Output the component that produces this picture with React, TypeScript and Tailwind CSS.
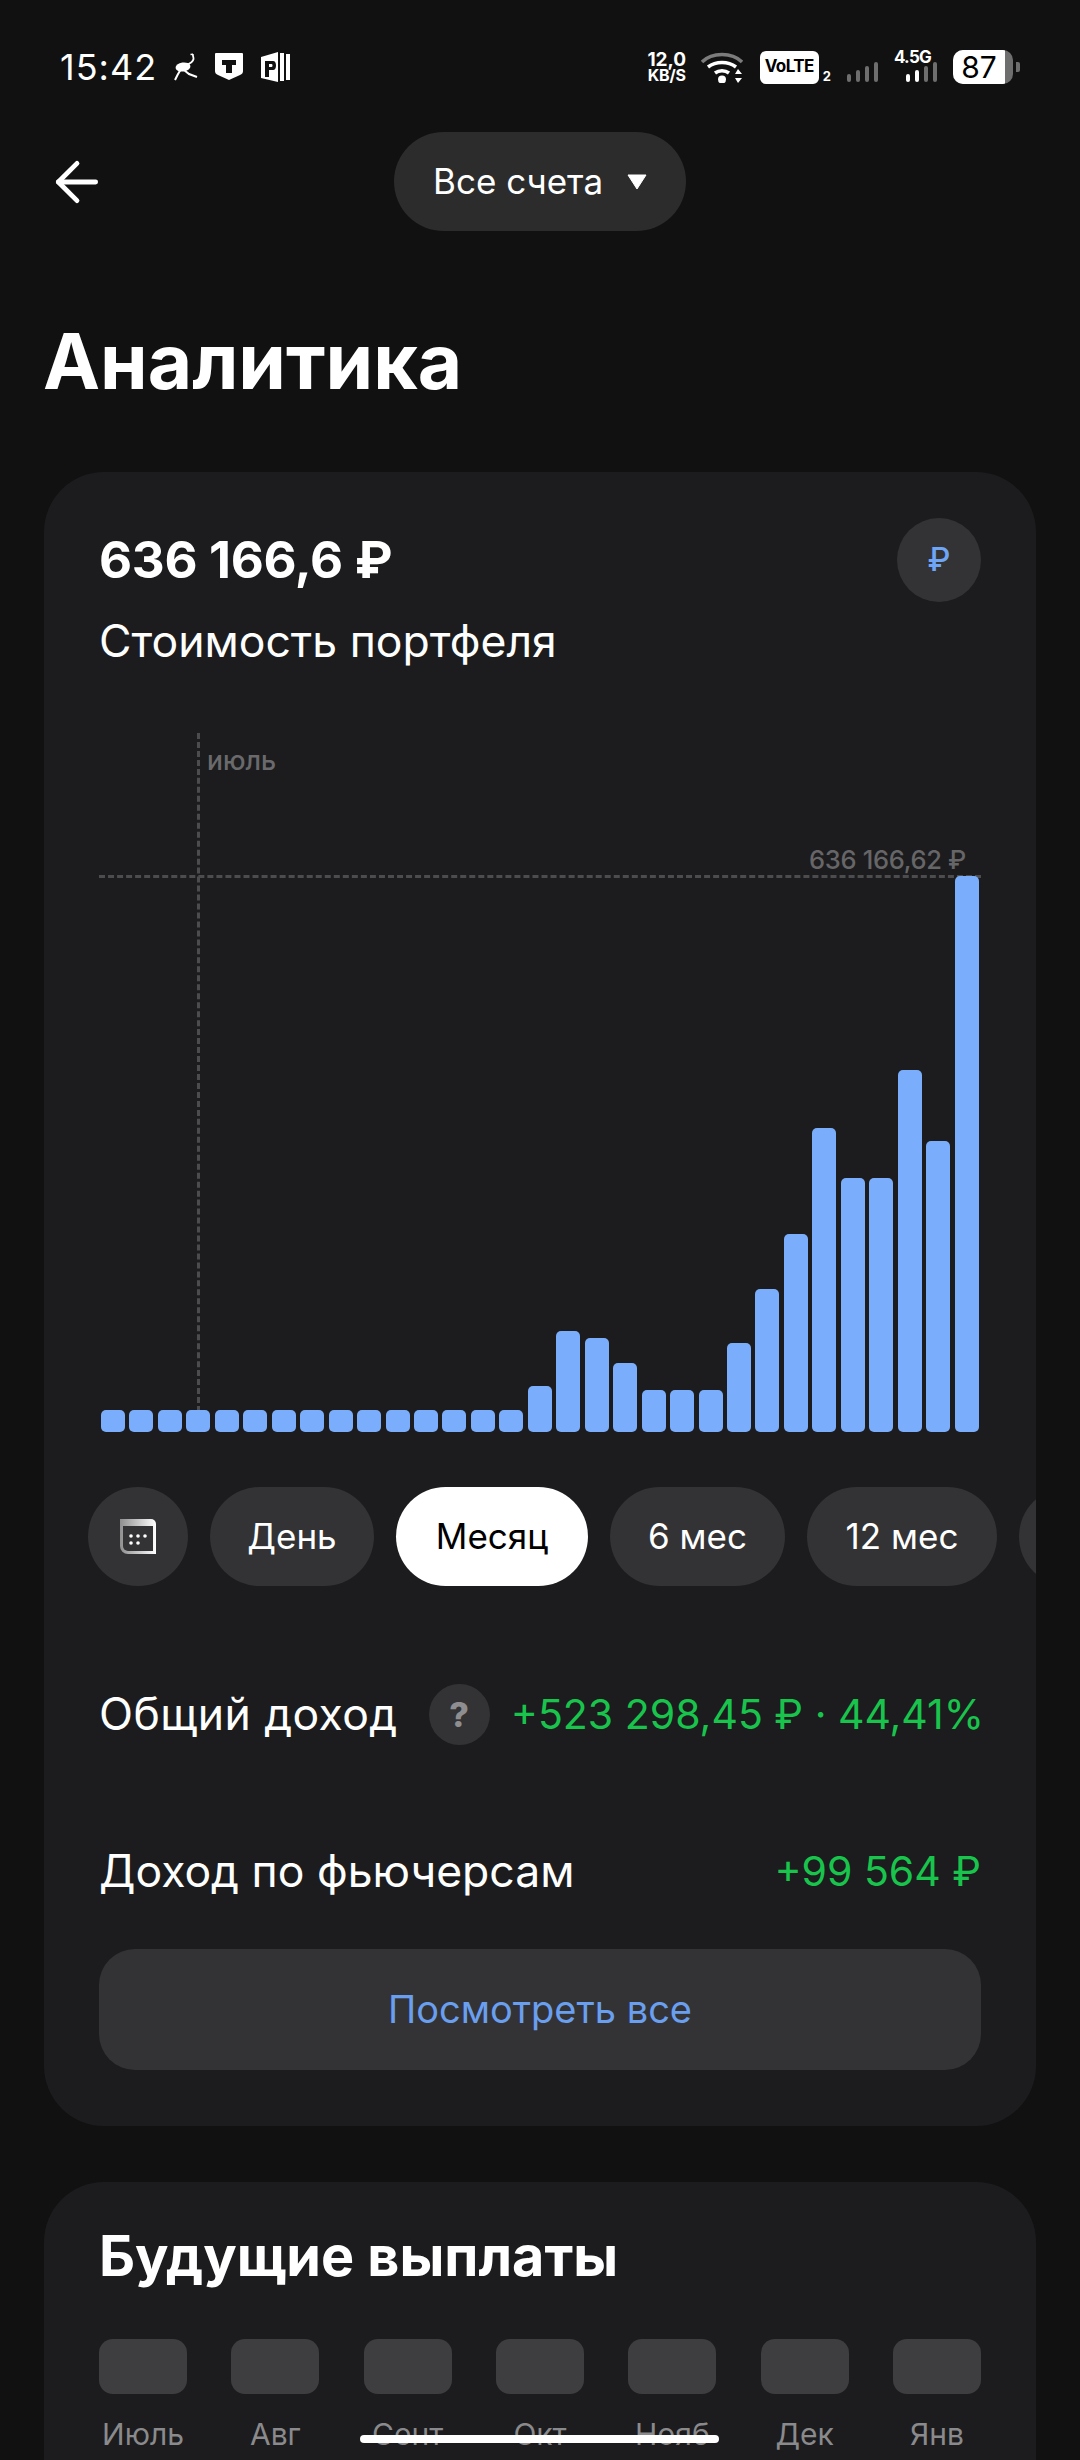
import { ArrowLeft } from 'lucide-react';

const bars = [22, 22, 22, 22, 22, 22, 22, 22, 22, 22, 22, 22, 22, 22, 22, 46, 101, 94, 69, 42, 42, 42, 89, 143, 198, 304, 254, 254, 362, 291, 556];
const chips = [
  { label: 'День', width: 'w-[164px]' },
  { label: 'Месяц', width: 'w-[192px]' },
  { label: '6 мес', width: 'w-[175px]' },
  { label: '12 мес', width: 'w-[190px]' },
];
const months = ['Июль', 'Авг', 'Сент', 'Окт', 'Нояб', 'Дек', 'Янв'];

function Signal({ lit }: { lit: number }) {
  const heights = ['h-[8px]', 'h-[12px]', 'h-[16px]', 'h-[20px]'];
  return (
    <div className="flex h-[20px] w-[31px] items-end justify-between">
      {heights.map((h, i) => (
        <div key={h} className={`w-[4px] rounded-full ${h} ${i < lit ? 'bg-white' : 'bg-[#6e6e6e]'}`} />
      ))}
    </div>
  );
}

function StatusBar() {
  return (
    <div className="flex h-[132px] items-start justify-between pl-[60px] pr-[60px] pt-[50px] text-white">
      <div className="flex h-[34px] items-center">
        <span className="text-[36px] leading-[34px] font-normal tracking-[1px]">15:42</span>
        {/* ostrich */}
        <svg className="ml-[17px]" width="24" height="28" viewBox="0 0 24 28" fill="none">
          <ellipse cx="9" cy="14" rx="7.5" ry="4.5" fill="white" transform="rotate(-8 9 14)" />
          <path d="M12 12c3-1 7-3 7.5-6 .2-2-1-3-.5-5" stroke="white" strokeWidth="1.8" />
          <path d="M19 1.2l-2.500.3" stroke="white" strokeWidth="1.5" />
          <path d="M7 16L3.500 22 1 27" stroke="white" strokeWidth="2" />
          <path d="M10 17l5 4 8 3" stroke="white" strokeWidth="2" />
        </svg>
        {/* shield */}
        <svg className="ml-[17px]" width="28" height="28" viewBox="0 0 28 28">
          <path d="M1 0h26a1 1 0 0 1 1 1v17c0 2-1 3-3 4l-11 5-11-5c-2-1-3-2-3-4V1a1 1 0 0 1 1-1z" fill="white" />
          <path d="M7 7h14v5h-4v8h-6v-8H7z" fill="#111112" />
        </svg>
        {/* parking app */}
        <svg className="ml-[18px]" width="29" height="30" viewBox="0 0 29 30">
          <path d="M0 5l17-5v30L0 26z" fill="white" />
          <path d="M19 1h4v28h-4zM25 2h4v26h-4z" fill="white" />
          <path d="M4 9h8c2 0 3 2 3 4.500s-1 4.500-3 4.500H8v7H4z" fill="#111112" />
          <path d="M8 12h2.500c.8 0 1 .8 1 1.500s-.2 1.500-1 1.500H8z" fill="white" />
        </svg>
      </div>
      <div className="flex h-[34px] items-center">
        <div className="flex w-[40px] flex-col items-center text-[19px] leading-[17px] font-bold">
          <span>12,0</span>
          <span className="text-[16px] leading-[15px] tracking-[-0.2px]">KB/S</span>
        </div>
        {/* wifi */}
        <svg className="ml-[14px]" width="42" height="32" viewBox="0 0 42 32" fill="none">
          <path d="M1 11C11 1 31 1 41 11" stroke="#7c7c7c" strokeWidth="3.5" />
          <path d="M7 16c8-6 20-6 28 0" stroke="white" strokeWidth="3.5" />
          <path d="M14 22c4-3 10-3 14 0" stroke="white" strokeWidth="3.5" />
          <circle cx="21" cy="28.500" r="4" fill="white" />
          <path d="M37 18l4 5h-7zM37 32l4-5h-7z" fill="white" />
        </svg>
        <div className="ml-[17px] flex h-[33px] w-[59px] items-center justify-center rounded-[6px] bg-white text-[17px] font-bold tracking-[-0.5px] text-black">
          VoLTE
        </div>
        <span className="ml-[4px] self-end pb-[1px] text-[13px] leading-[13px] font-bold">2</span>
        <div className="ml-[16px] self-end pb-[2px]">
          <Signal lit={0} />
        </div>
        <div className="relative ml-[16px] h-[34px] w-[43px]">
          <span className="absolute top-[-1px] left-0 text-[17px] leading-[17px] font-bold tracking-[-0.8px]">4.5G</span>
          <div className="absolute right-0 bottom-[2px]">
            <Signal lit={2} />
          </div>
        </div>
        <div className="ml-[16px] flex h-[34px] w-[60px] overflow-hidden rounded-[10px] bg-[#6e6e6e]">
          <div className="flex w-[52px] items-center justify-center bg-white text-[30px] leading-none text-black">87</div>
        </div>
        <div className="ml-[3px] h-[10px] w-[4px] rounded-r-[2px] bg-[#6e6e6e]" />
      </div>
    </div>
  );
}

function CalendarIcon() {
  return (
    <svg width="36" height="35" viewBox="0 0 36 35" fill="none">
      <defs>
        <linearGradient id="cal" x1="0" y1="0" x2="1" y2="0">
          <stop offset="0" stopColor="#8f8f90" />
          <stop offset="1" stopColor="#ffffff" />
        </linearGradient>
      </defs>
      <path d="M0 0h31a5 5 0 0 1 5 5v30H8a8 8 0 0 1-8-8z" fill="url(#cal)" />
      <path d="M3 7h30v25H8a5 5 0 0 1-5-5z" fill="#333335" />
      <g fill="white">
        <circle cx="11" cy="17" r="1.800" />
        <circle cx="18" cy="17" r="1.800" />
        <circle cx="25" cy="17" r="1.800" />
        <circle cx="11" cy="24" r="1.800" />
        <circle cx="18" cy="24" r="1.800" />
      </g>
    </svg>
  );
}

function Chart() {
  return (
    <div className="relative mt-[67px] flex h-[699px] items-end justify-between px-[2px]">
      <div className="absolute top-0 bottom-[20px] left-[98px] border-l-[3px] border-dashed border-[#4c4c4e]" />
      <span className="absolute top-[12px] left-[108px] text-[26.5px] leading-[30px] font-medium text-[#6a6a6c]">июль</span>
      <div className="absolute top-[142px] right-0 left-0 border-t-[3px] border-dashed border-[#4c4c4e]" />
      <span className="absolute top-[112px] right-[15px] text-[25.5px] leading-[30px] font-medium tracking-[-0.3px] text-[#666668]">636 166,62 ₽</span>
      {bars.map((h, i) => (
        <div key={i} className="relative w-[24px] rounded-[5px] bg-[#7aaefc]" style={{ height: h }} />
      ))}
    </div>
  );
}

function Chips() {
  return (
    <div className="mt-[55px] -mr-[55px] -ml-[11px] flex gap-[22px] overflow-hidden">
      <div className="flex h-[99px] w-[100px] shrink-0 items-center justify-center rounded-full bg-[#333335]">
        <CalendarIcon />
      </div>
      {chips.map((c) => (
        <div
          key={c.label}
          className={`flex h-[99px] shrink-0 items-center justify-center rounded-full text-[35px] ${c.width} ${
            c.label === 'Месяц' ? 'bg-white text-black' : 'bg-[#333335] text-white'
          }`}
        >
          {c.label}
        </div>
      ))}
      <div className="h-[99px] w-[100px] shrink-0 rounded-full bg-[#333335]" />
    </div>
  );
}

export default function App() {
  return (
    <div className="relative h-[2460px] w-[1080px] overflow-hidden bg-[#111112] font-['Inter',sans-serif] text-white">
      <StatusBar />

      {/* Header */}
      <div className="relative flex h-[99px] justify-center">
        <ArrowLeft className="absolute top-[18px] left-[45px] text-white" size={64} strokeWidth={1.8} />
        <div className="flex h-[99px] w-[292px] items-center rounded-full bg-[#2c2c2d] pl-[39px] text-[35px]">
          Все счета
          <svg className="ml-[24px]" width="20" height="16" viewBox="0 0 20 16">
            <path d="M1 1h18l-9 14z" fill="white" stroke="white" strokeLinejoin="round" />
          </svg>
        </div>
      </div>

      <h1 className="mt-[85px] pl-[43px] text-[76.5px] leading-[90px] font-bold">Аналитика</h1>

      {/* Portfolio card */}
      <section className="mx-[44px] mt-[66px] overflow-hidden rounded-[60px] bg-[#1c1c1e] px-[55px] pt-[46px] pb-[56px]">
        <div className="flex h-[84px] items-center justify-between">
          <span className="text-[51px] font-bold tracking-[-0.3px]">636 166,6 ₽</span>
          <div className="flex h-[84px] w-[84px] items-center justify-center rounded-full bg-[#333335] text-[32px] font-medium text-[#6ea6f5]">
            ₽
          </div>
        </div>
        <p className="mt-[14px] text-[44.5px] leading-[50px]">Стоимость портфеля</p>

        <Chart />
        <Chips />

        <div className="mt-[98px] flex h-[61px] items-center justify-between">
          <div className="flex items-center">
            <span className="text-[44.5px] tracking-[0.4px]">Общий доход</span>
            <span className="ml-[31px] flex h-[61px] w-[61px] items-center justify-center rounded-full bg-[#333335] text-[34px] font-extrabold text-[#8e8e90]">
              ?
            </span>
          </div>
          <span className="-mr-[3px] text-[41px] text-[#19c44c]">+523 298,45 ₽ · 44,41%</span>
        </div>
        <div className="mt-[96px] flex h-[61px] items-center justify-between">
          <span className="text-[44.5px]">Доход по фьючерсам</span>
          <span className="text-[41px] text-[#19c44c]">+99 564 ₽</span>
        </div>
        <button className="mt-[47px] flex h-[121px] w-full items-center justify-center rounded-[36px] bg-[#333335] text-[38px] text-[#6a9ff0]">
          Посмотреть все
        </button>
      </section>

      {/* Future payouts */}
      <section className="mx-[44px] mt-[56px] rounded-t-[60px] bg-[#1c1c1e] px-[55px] pt-[44px] pb-[60px]">
        <h2 className="text-[55.7px] leading-[60px] font-bold">Будущие выплаты</h2>
        <div className="mt-[53px] flex justify-between">
          {months.map((m) => (
            <div key={m} className="flex w-[88px] flex-col items-center">
              <div className="h-[55px] w-[88px] rounded-[14px] bg-[#3e3e40]" />
              <span className="mt-[20px] text-[30px] leading-[40px] whitespace-nowrap text-[#8a8a8c]">{m}</span>
            </div>
          ))}
        </div>
      </section>

      {/* Home indicator */}
      <div className="absolute top-[2435px] left-[360px] h-[8px] w-[359px] rounded-full bg-white" />
    </div>
  );
}
